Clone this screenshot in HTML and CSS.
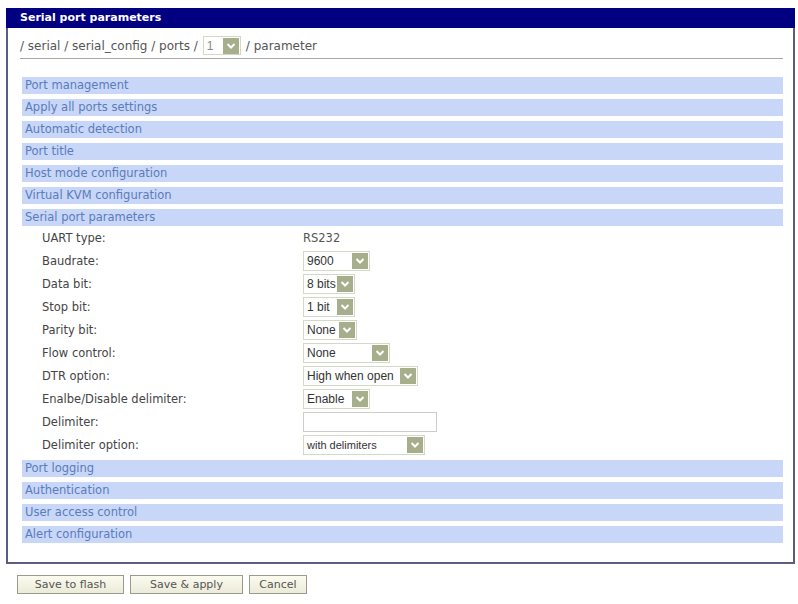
FILE: index.html
```html
<!DOCTYPE html>
<html lang="en">
<head>
  <meta charset="UTF-8">
  <title>Serial port parameters</title>
  <link rel="stylesheet" href="styles.css">
</head>
<body>
  <div class="panel">
    <div class="panel-head">Serial port parameters</div>
    <div class="panel-body">
      <div class="crumbs">
        <span>/ serial / serial_config / ports /</span>
        <span class="combo crumb-combo"><span class="val">1</span><span class="arrow"><svg width="10" height="8" viewBox="0 0 10 8"><path d="M1.5 2 L5 5.5 L8.5 2" fill="none" stroke="#fff" stroke-width="2"/></svg></span></span>
        <span>/ parameter</span>
      </div>

      <div class="bar">Port management</div>
      <div class="bar">Apply all ports settings</div>
      <div class="bar">Automatic detection</div>
      <div class="bar">Port title</div>
      <div class="bar">Host mode configuration</div>
      <div class="bar">Virtual KVM configuration</div>
      <div class="bar">Serial port parameters</div>

      <div class="form">
        <div class="row"><span class="lbl">UART type:</span><span class="plain">RS232</span></div>
        <div class="row"><span class="lbl">Baudrate:</span>
          <span class="combo" style="width:67px"><span class="val">9600</span><span class="arrow"><svg width="10" height="8" viewBox="0 0 10 8"><path d="M1.5 2 L5 5.5 L8.5 2" fill="none" stroke="#fff" stroke-width="2"/></svg></span></span></div>
        <div class="row"><span class="lbl">Data bit:</span>
          <span class="combo" style="width:52px"><span class="val">8 bits</span><span class="arrow"><svg width="10" height="8" viewBox="0 0 10 8"><path d="M1.5 2 L5 5.5 L8.5 2" fill="none" stroke="#fff" stroke-width="2"/></svg></span></span></div>
        <div class="row"><span class="lbl">Stop bit:</span>
          <span class="combo" style="width:52px"><span class="val">1 bit</span><span class="arrow"><svg width="10" height="8" viewBox="0 0 10 8"><path d="M1.5 2 L5 5.5 L8.5 2" fill="none" stroke="#fff" stroke-width="2"/></svg></span></span></div>
        <div class="row"><span class="lbl">Parity bit:</span>
          <span class="combo" style="width:54px"><span class="val">None</span><span class="arrow"><svg width="10" height="8" viewBox="0 0 10 8"><path d="M1.5 2 L5 5.5 L8.5 2" fill="none" stroke="#fff" stroke-width="2"/></svg></span></span></div>
        <div class="row"><span class="lbl">Flow control:</span>
          <span class="combo" style="width:87px"><span class="val">None</span><span class="arrow"><svg width="10" height="8" viewBox="0 0 10 8"><path d="M1.5 2 L5 5.5 L8.5 2" fill="none" stroke="#fff" stroke-width="2"/></svg></span></span></div>
        <div class="row"><span class="lbl">DTR option:</span>
          <span class="combo" style="width:115px"><span class="val">High when open</span><span class="arrow"><svg width="10" height="8" viewBox="0 0 10 8"><path d="M1.5 2 L5 5.5 L8.5 2" fill="none" stroke="#fff" stroke-width="2"/></svg></span></span></div>
        <div class="row"><span class="lbl">Enalbe/Disable delimiter:</span>
          <span class="combo" style="width:67px"><span class="val">Enable</span><span class="arrow"><svg width="10" height="8" viewBox="0 0 10 8"><path d="M1.5 2 L5 5.5 L8.5 2" fill="none" stroke="#fff" stroke-width="2"/></svg></span></span></div>
        <div class="row"><span class="lbl">Delimiter:</span><input class="text-in" type="text"></div>
        <div class="row"><span class="lbl">Delimiter option:</span>
          <span class="combo" style="width:122px"><span class="val small">with delimiters</span><span class="arrow"><svg width="10" height="8" viewBox="0 0 10 8"><path d="M1.5 2 L5 5.5 L8.5 2" fill="none" stroke="#fff" stroke-width="2"/></svg></span></span></div>
      </div>

      <div class="bar">Port logging</div>
      <div class="bar">Authentication</div>
      <div class="bar">User access control</div>
      <div class="bar">Alert configuration</div>
    </div>
  </div>

  <div class="buttons">
    <button style="width:107px">Save to flash</button>
    <button style="width:113px">Save &amp; apply</button>
    <button style="width:58px">Cancel</button>
  </div>
</body>
</html>
```

FILE: styles.css
```css
body { margin: 0; background: #fff; font-family: "DejaVu Sans", Verdana, sans-serif; color: #444; }
.panel { width: 789px; margin: 8px 0 0 6px; }
.panel-head { background: #000080; color: #fff; font-weight: bold; font-size: 11px; height: 20px; line-height: 20px; padding-left: 14px; }
.panel-body { border: 2px solid #5c5c80; border-top: none; padding: 0 10px 14px 12px; }
.crumbs { height: 25px; padding-top: 5px; display: flex; align-items: center; gap: 5px; font-size: 12px; color: #555; border-bottom: 1px solid #a8a8a8; margin-bottom: 18px; }
.bar { height: 17px; line-height: 17px; margin: 0 0 5px 2px; padding-left: 3px; background: #c8d6f7; color: #5a7cbb; font-size: 11.5px; }
.form { margin: -5px 0 4px 2px; padding-left: 20px; }
.row { height: 23px; display: grid; grid-template-columns: 261px auto; align-items: center; font-size: 11.5px; }
.lbl { color: #444; }
.plain { color: #555; }
.combo { display: inline-flex; align-items: center; justify-content: space-between; height: 20px; box-sizing: border-box; border: 1px solid #d6d8c6; background: #fff; padding-left: 3px; justify-self: start; font-family: "Liberation Sans", Arial, sans-serif; font-size: 12px; color: #333; }
.combo .small { font-size: 11px; }
.arrow { width: 16px; height: 16px; margin-right: 1px; background: #a7ae8c; display: flex; align-items: center; justify-content: center; }
.crumb-combo { width: 38px; height: 19px; }
.crumb-combo .val { color: #888; }
.text-in { width: 134px; height: 20px; box-sizing: border-box; border: 1px solid #ccc; padding: 0; margin: 0; justify-self: start; }
.buttons { display: flex; gap: 6px; margin: 11px 0 0 17px; }
button { height: 19px; padding: 0; background: linear-gradient(#fbfbf0, #ecebd8); border: 1px solid #9a9a90; font-family: "DejaVu Sans", Verdana, sans-serif; font-size: 11px; color: #555; }
```
